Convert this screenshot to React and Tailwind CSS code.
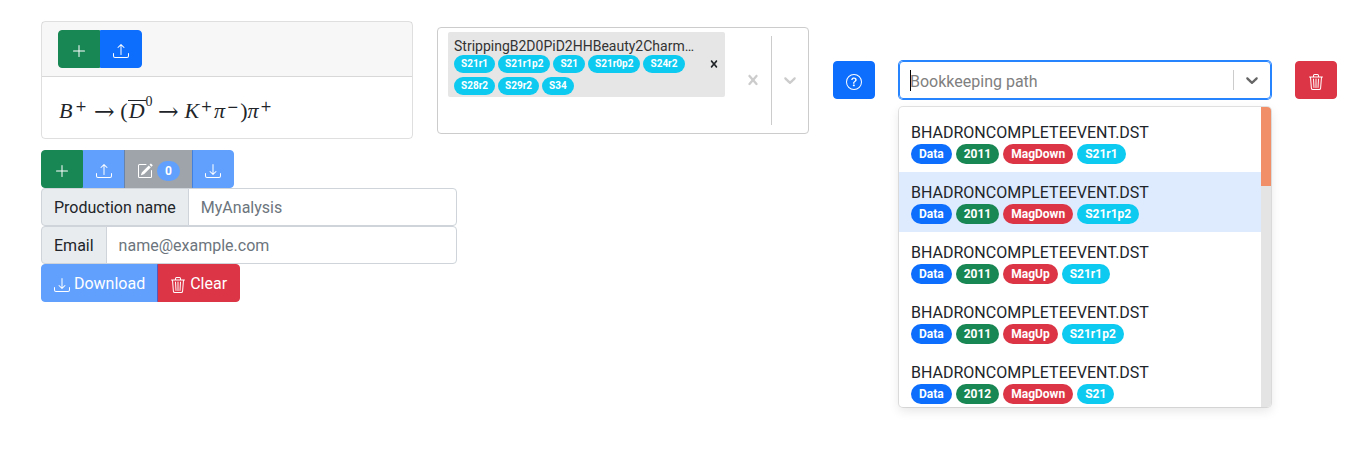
import React from "react";
import clsx from "clsx";
import {
  BsPlusLg,
  BsUpload,
  BsDownload,
  BsPencilSquare,
  BsTrash3,
  BsQuestionCircle,
} from "react-icons/bs";

const VARIANTS = {
  success: "border-[#198754] bg-[#198754]",
  primary: "border-[#0d6efd] bg-[#0d6efd]",
  secondary: "border-[#6c757d] bg-[#6c757d]",
  danger: "border-[#dc3545] bg-[#dc3545]",
};

const BADGES = {
  data: "bg-[#0d6efd]",
  year: "bg-[#198754]",
  polarity: "bg-[#dc3545]",
  stripping: "bg-[#0dcaf0]",
};

function Button({ variant, className, disabled, children, ...rest }) {
  return (
    <button
      type="button"
      disabled={disabled}
      className={clsx(
        "shrink-0 whitespace-nowrap border px-3 pt-[7px] pb-[5px] text-base leading-6 text-white",
        VARIANTS[variant],
        disabled && "opacity-65",
        className
      )}
      {...rest}
    >
      {children}
    </button>
  );
}

function Icon({ of: Glyph }) {
  return <Glyph className="inline-block size-4 align-middle" aria-hidden="true" />;
}

function Cross({ className }) {
  return (
    <svg viewBox="0 0 20 20" className={clsx("fill-current", className)} aria-hidden="true">
      <path d="M14.348 14.849c-0.469 0.469-1.229 0.469-1.697 0l-2.651-3.030-2.651 3.029c-0.469 0.469-1.229 0.469-1.697 0-0.469-0.469-0.469-1.229 0-1.697l2.758-3.15-2.759-3.152c-0.469-0.469-0.469-1.228 0-1.697s1.228-0.469 1.697 0l2.652 3.031 2.651-3.031c0.469-0.469 1.228-0.469 1.697 0s0.469 1.229 0 1.697l-2.758 3.152 2.758 3.15c0.469 0.469 0.469 1.229 0 1.698z" />
    </svg>
  );
}

function Chevron() {
  return (
    <svg viewBox="0 0 20 20" className="size-5 fill-current" aria-hidden="true">
      <path d="M4.516 7.548c0.436-0.446 1.043-0.481 1.576 0l3.908 3.747 3.908-3.747c0.533-0.481 1.141-0.446 1.574 0 0.436 0.445 0.408 1.197 0 1.615-0.406 0.418-4.695 4.502-4.695 4.502-0.217 0.223-0.502 0.335-0.787 0.335s-0.57-0.112-0.789-0.335c0 0-4.287-4.084-4.695-4.502s-0.436-1.17 0-1.615z" />
    </svg>
  );
}

function Arrow() {
  return (
    <span className="mx-[5px] font-['DejaVu_Math_TeX_Gyre','Liberation_Serif',serif]">→</span>
  );
}

function Sup({ children }) {
  return (
    <span className="mx-[2px] pb-[7px] font-['DejaVu_Math_TeX_Gyre','Liberation_Serif',serif] text-sm leading-none">
      <sup className="-top-[7px] text-sm">{children}</sup>
    </span>
  );
}

function DecayCard() {
  return (
    <section className="rounded border border-black/[0.125]">
      <header className="flex border-b border-black/[0.125] bg-black/[0.03] px-4 py-2">
        <Button variant="success" className="rounded-l" aria-label="Add">
          <Icon of={BsPlusLg} />
        </Button>
        <Button variant="primary" className="rounded-r" aria-label="Upload">
          <Icon of={BsUpload} />
        </Button>
      </header>
      <div className="p-4">
        <p className="flex h-[29px] items-baseline whitespace-nowrap font-['Liberation_Serif',serif] text-[22px] leading-9">
          <i className="px-px">B</i>
          <Sup>+</Sup>
          <Arrow />
          <span>(</span>
          <i className="border-t border-current px-px leading-5">D</i>
          <sup className="-top-[12px] text-sm leading-none">0</sup>
          <Arrow />
          <i>K</i>
          <Sup>+</Sup>
          <i>π</i>
          <Sup>−</Sup>
          <span>)</span>
          <i>π</i>
          <Sup>+</Sup>
        </p>
      </div>
    </section>
  );
}

const STRIPPINGS = ["S21r1", "S21r1p2", "S21", "S21r0p2", "S24r2", "S28r2", "S29r2", "S34"];

function StrippingSelect() {
  return (
    <div className="flex min-h-[107px] rounded border border-[#ccc]">
      <div className="min-w-0 flex-1 px-2 py-[2px]">
        <div className="m-[2px] flex rounded-xs bg-[#e6e6e6]">
          <div className="min-w-0 flex-1 pt-[5px] pb-[2px] pl-[6px]">
            <div className="truncate text-sm leading-[18px] text-[#333]">
              StrippingB2D0PiD2HHBeauty2Charm…
            </div>
            <ul className="flex flex-wrap gap-x-[3px] gap-y-1">
              {STRIPPINGS.map((name) => (
                <li
                  key={name}
                  className="rounded-full bg-[#0dcaf0] px-[7px] text-[10px] font-bold leading-[18px] text-white"
                >
                  {name}
                </li>
              ))}
            </ul>
          </div>
          <button type="button" aria-label="Remove line" className="px-1">
            <Cross className="size-[14px]" />
          </button>
        </div>
      </div>
      <button type="button" aria-label="Clear lines" className="p-2 text-[#ccc]">
        <Cross className="size-5" />
      </button>
      <span className="my-2 w-px bg-[#ccc]" />
      <button type="button" aria-label="Show lines" className="p-2 text-[#ccc]">
        <Chevron />
      </button>
    </div>
  );
}

const PATHS = [
  { year: "2011", polarity: "MagDown", stripping: "S21r1" },
  { year: "2011", polarity: "MagDown", stripping: "S21r1p2", focused: true },
  { year: "2011", polarity: "MagUp", stripping: "S21r1" },
  { year: "2011", polarity: "MagUp", stripping: "S21r1p2" },
  { year: "2012", polarity: "MagDown", stripping: "S21" },
];

function Badge({ kind, children }) {
  return (
    <span
      className={clsx("rounded-full px-2 text-xs font-bold leading-5 text-white", BADGES[kind])}
    >
      {children}
    </span>
  );
}

function PathSelect() {
  return (
    <div className="relative">
      <div className="flex h-[38px] rounded border border-[#2684ff] ring-1 ring-[#2684ff]">
        <div className="flex min-w-0 flex-1 items-center pl-[10px]">
          <span className="-mr-px h-[21px] w-px bg-black" />
          <input
            type="text"
            aria-label="Bookkeeping path"
            placeholder="Bookkeeping path"
            className="w-full min-w-0 pt-1 outline-none placeholder:text-[#808080]"
          />
        </div>
        <span className="my-2 w-px bg-[#ccc]" />
        <button type="button" aria-label="Show paths" className="px-2 text-[#666]">
          <Chevron />
        </button>
      </div>
      <div className="absolute inset-x-0 top-full z-10 mt-2 flex h-[300px] overflow-hidden rounded bg-white shadow-[0_0_0_1px_rgba(0,0,0,0.1),0_4px_11px_rgba(0,0,0,0.1)]">
        <ul role="listbox" aria-label="Paths" className="min-w-0 flex-1 overflow-hidden pt-[5px]">
          {PATHS.map((p) => (
            <li
              key={p.year + p.polarity + p.stripping}
              role="option"
              aria-selected={Boolean(p.focused)}
              className={clsx("px-3 pt-[9px] pb-2", p.focused && "bg-[#deebff]")}
            >
              <div className="truncate leading-[23px]">BHADRONCOMPLETEEVENT.DST</div>
              <div className="flex gap-1">
                <Badge kind="data">Data</Badge>
                <Badge kind="year">{p.year}</Badge>
                <Badge kind="polarity">{p.polarity}</Badge>
                <Badge kind="stripping">{p.stripping}</Badge>
              </div>
            </li>
          ))}
        </ul>
        <div className="w-[10px] bg-[#e4e4e4]">
          <div className="h-[79px] bg-[#f08f68]" />
        </div>
      </div>
    </div>
  );
}

function Field({ id, label, ...input }) {
  return (
    <div className="flex">
      <label
        htmlFor={id}
        className="rounded-l border border-[#ced4da] bg-[#e9ecef] px-3 pt-[7px] pb-[5px] leading-6"
      >
        {label}
      </label>
      <input
        id={id}
        className="-ml-px min-w-0 flex-1 rounded-r border border-[#ced4da] px-3 pt-[7px] pb-[5px] leading-6 outline-none placeholder:text-[#6c757d]"
        {...input}
      />
    </div>
  );
}

export default function App() {
  return (
    <main className="min-h-screen bg-white pl-[41px] pr-[27px] pt-[21px] font-[Roboto,sans-serif] text-base text-[#212529]">
      <div className="flex items-center gap-6">
        <div className="min-w-0 flex-1">
          <DecayCard />
        </div>
        <div className="min-w-0 flex-1">
          <StrippingSelect />
        </div>
        <Button variant="primary" className="rounded" aria-label="Help">
          <Icon of={BsQuestionCircle} />
        </Button>
        <div className="min-w-0 flex-1">
          <PathSelect />
        </div>
        <Button variant="danger" className="rounded" aria-label="Delete">
          <Icon of={BsTrash3} />
        </Button>
      </div>

      <div className="mt-[11px] flex">
        <Button variant="success" className="rounded-l" aria-label="Add decay">
          <Icon of={BsPlusLg} />
        </Button>
        <Button variant="primary" disabled aria-label="Upload all">
          <Icon of={BsUpload} />
        </Button>
        <Button variant="secondary" disabled className="-ml-px" aria-label="Edit selected">
          <Icon of={BsPencilSquare} />{" "}
          <span className="inline-block rounded-full bg-[#0d6efd] px-2 text-xs font-bold leading-5">
            0
          </span>
        </Button>
        <Button variant="primary" disabled className="-ml-px rounded-r" aria-label="Download all">
          <Icon of={BsDownload} />
        </Button>
      </div>

      <form className="max-w-[416px]">
        <Field id="name" label="Production name" type="text" placeholder="MyAnalysis" />
        <Field id="email" label="Email" type="email" placeholder="name@example.com" />
        <div className="flex">
          <Button variant="primary" disabled className="rounded-l">
            <Icon of={BsDownload} /> Download
          </Button>
          <Button variant="danger" className="-ml-px rounded-r">
            <Icon of={BsTrash3} /> Clear
          </Button>
        </div>
      </form>
    </main>
  );
}
